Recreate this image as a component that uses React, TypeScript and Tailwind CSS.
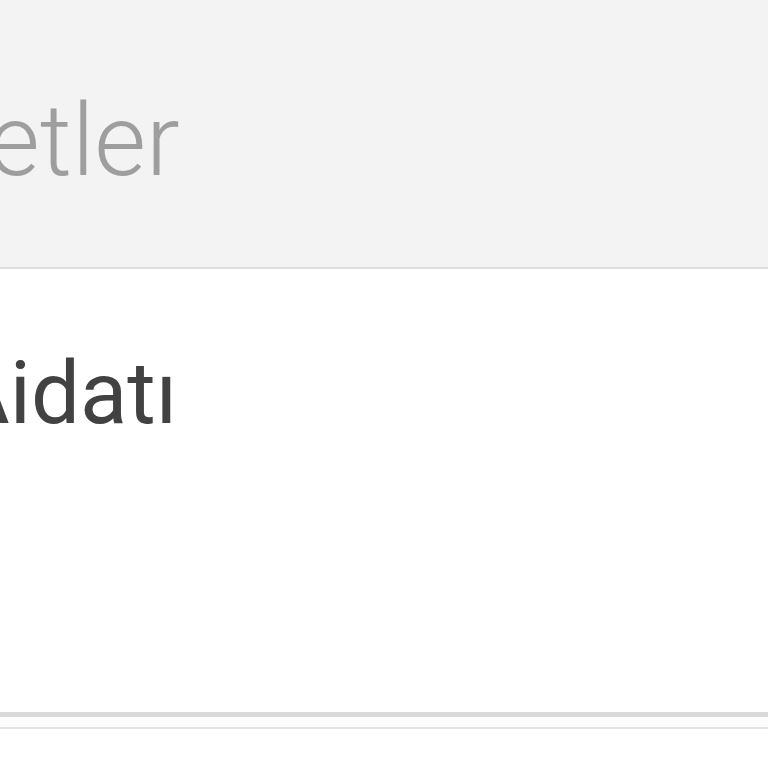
export default function App() {
  return (
    <div className="w-[768px] h-[768px] overflow-hidden bg-white flex flex-col" style={{ fontFamily: 'Roboto, "Noto Sans", sans-serif' }}>
      <div className="h-[267px] bg-[#f3f3f3] flex items-start overflow-hidden">
        <span className="mt-[81px] ml-[-12px] text-[100px] leading-[120px] font-light text-[#9e9e9e] whitespace-nowrap">etler</span>
      </div>
      <div className="h-[2px] bg-[#dedede]" />
      <div className="h-[443px] bg-white flex items-start overflow-hidden">
        <span className="mt-[74px] ml-[-47px] text-[87px] leading-[100px] text-[#424242] whitespace-nowrap">Aidatı</span>
      </div>
      <div className="h-[5px] bg-[#d9d9d9]" />
      <div className="h-[10px] bg-[#fcfcfc]" />
      <div className="h-[2px] bg-[#e4e4e4]" />
      <div className="flex-1 bg-white" />
    </div>
  );
}
